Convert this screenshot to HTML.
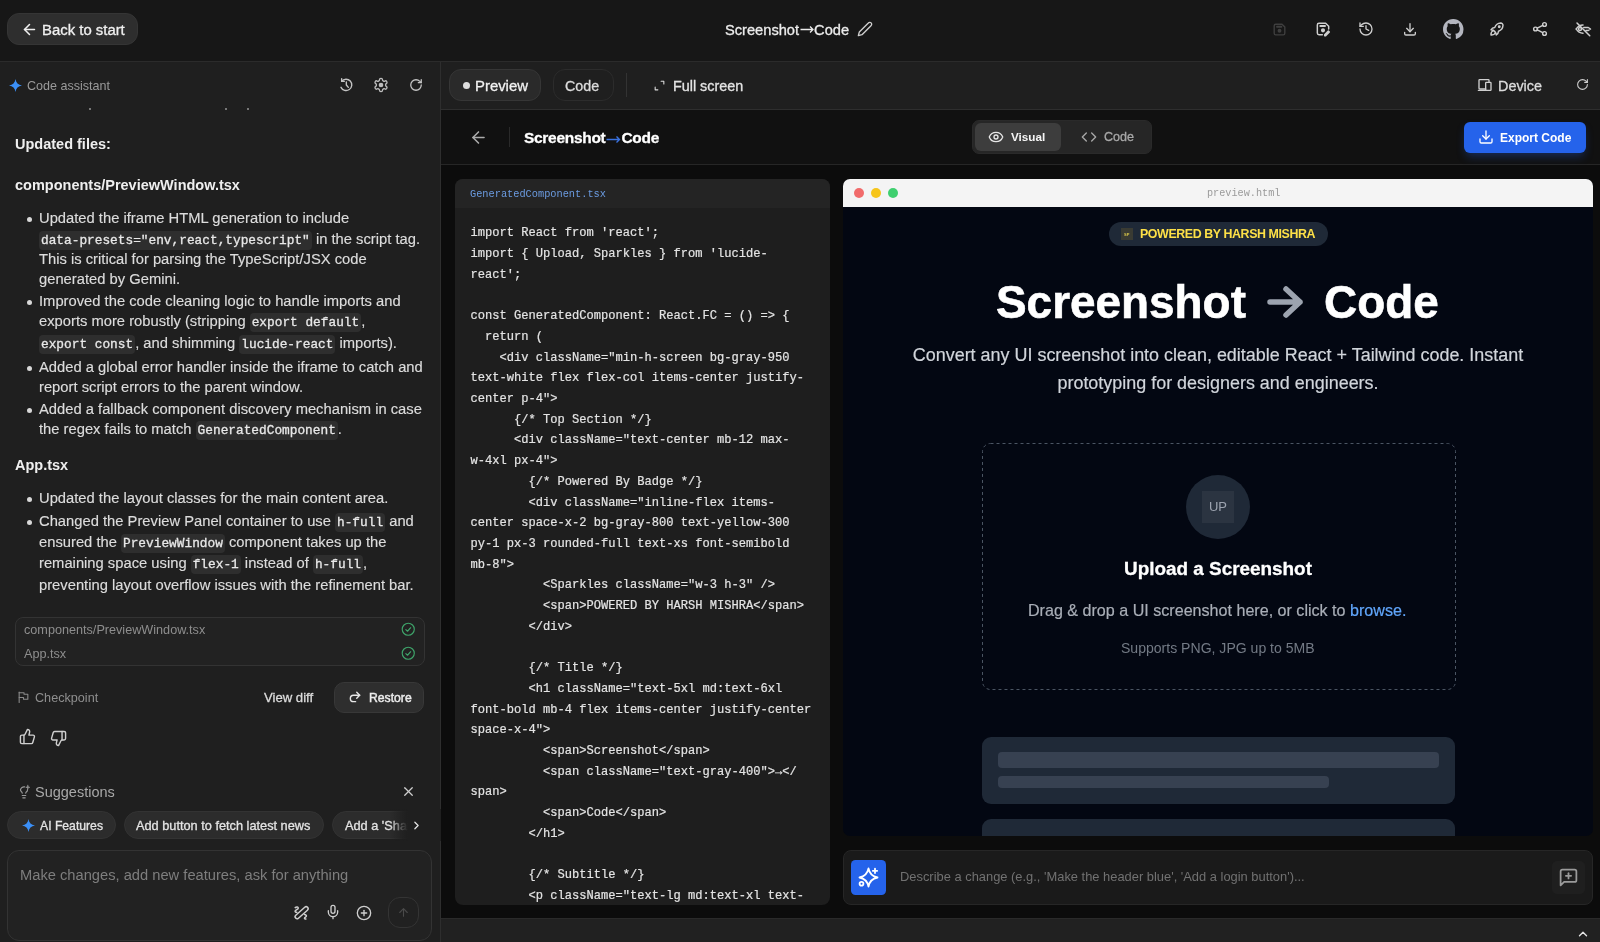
<!DOCTYPE html>
<html><head><meta charset="utf-8">
<style>
*{box-sizing:border-box;margin:0;padding:0}
html,body{width:1600px;height:942px;overflow:hidden;background:#0a0a0a;font-family:"Liberation Sans",sans-serif;color:#e5e5e5;-webkit-font-smoothing:antialiased}
.a{will-change:transform}
.a{position:absolute}
svg{display:block}
.ic{fill:none;stroke:currentColor;stroke-width:2;stroke-linecap:round;stroke-linejoin:round}
.mono{font-family:"Liberation Mono",monospace}
.med{-webkit-text-stroke:0.3px currentColor}
/* top bar */
#top{left:0;top:0;width:1600px;height:62px;background:#171717;border-bottom:1px solid #2b2b2b}
#left{left:0;top:62px;width:440px;height:880px;background:#1f1f1f}
#lborder{left:440px;top:62px;width:1px;height:880px;background:#2e2e2e}
#tool{left:441px;top:62px;width:1159px;height:48px;background:#1f1f1f;border-bottom:1px solid #2e2e2e}
#phead{left:441px;top:110px;width:1159px;height:55px;background:#111111;border-bottom:1px solid #262626}
#content{left:441px;top:165px;width:1159px;height:754px;background:#0c0c0c}
#bstrip{left:441px;top:918px;width:1159px;height:24px;background:#212121;border-top:1px solid #2a2a2a}
.ln{position:absolute;left:39px;font-size:14.75px;line-height:20px;white-space:pre;color:#dcdcdc;-webkit-text-stroke:0.15px #dcdcdc}
.ln code{font-family:"Liberation Mono",monospace;font-size:12.8px;background:#2e2e2e;border-radius:4px;padding:2px 2px;color:#e8e8e8;-webkit-text-stroke:0.3px #e8e8e8}
.bul{position:absolute;left:27px;width:5px;height:5px;border-radius:50%;background:#d8d8d8}
.h{position:absolute;left:15px;font-size:14.5px;font-weight:bold;line-height:20px;color:#efefef;white-space:pre}
.code{position:absolute;left:470.5px;top:223.4px;font-family:"Liberation Mono",monospace;font-size:12.08px;line-height:20.7px;-webkit-text-stroke:0.2px #e4e4e4;color:#e4e4e4;white-space:pre}
</style></head><body>

<!-- TOP BAR -->
<div id="top" class="a"></div>
<div class="a" style="left:7px;top:13px;width:131px;height:32px;border-radius:12px;background:#2e2e2e;border:1px solid #353535"></div>
<svg class="a ic" style="left:21px;top:20.5px;color:#efefef;stroke-width:2.2" width="17" height="17" viewBox="0 0 24 24"><path d="m12 19-7-7 7-7"/><path d="M19 12H5"/></svg>
<div class="a med" style="left:42px;top:20.6px;font-size:14.9px;line-height:18px;color:#f0f0f0">Back to start</div>

<div class="a med" style="left:725px;top:20.6px;font-size:14.65px;line-height:18px;color:#ececec">Screenshot<svg style="display:inline-block;vertical-align:1px;margin:0 0.5px" width="14" height="9" viewBox="0 0 14 9"><path d="M0.5 4.5h12.5M10 1.5l3 3-3 3" fill="none" stroke="#ececec" stroke-width="1.3"/></svg>Code</div>
<svg class="a ic" style="left:857px;top:21px;color:#cfcfcf" width="16" height="16" viewBox="0 0 24 24"><path d="M17 3a2.85 2.83 0 1 1 4 4L7.5 20.5 2 22l1.5-5.5Z"/></svg>

<!-- top icons -->
<svg class="a ic" style="left:1272px;top:22px;color:#3f3f3f;stroke-width:2.2" width="15" height="15" viewBox="0 0 24 24"><path d="M6 3.5h10l4.5 4.5v10a2.5 2.5 0 0 1-2.5 2.5H6A2.5 2.5 0 0 1 3.5 18V6A2.5 2.5 0 0 1 6 3.5"/><circle cx="12" cy="14" r="2" fill="currentColor"/><path d="M8 7.5h7" stroke-width="3"/></svg>
<svg class="a ic" style="left:1315px;top:21px;color:#cfcfcf;stroke-width:2.2" width="16" height="16" viewBox="0 0 24 24"><path d="M11 20.5H6A2.5 2.5 0 0 1 3.5 18V6A2.5 2.5 0 0 1 6 3.5h10l4.5 4.5v4"/><circle cx="12" cy="14" r="2" fill="currentColor"/><path d="M8 7.5h7" stroke-width="3"/><path d="M20 15l-5.5 5.5V22H16l5.5-5.5z"/></svg>
<svg class="a ic" style="left:1358px;top:21px;color:#cfcfcf" width="16" height="16" viewBox="0 0 24 24"><path d="M3 12a9 9 0 1 0 9-9 9.75 9.75 0 0 0-6.74 2.74L3 8"/><path d="M3 3v5h5"/><path d="M12 7v5l4 2"/></svg>
<svg class="a ic" style="left:1402px;top:20.5px;color:#cfcfcf" width="16" height="16" viewBox="0 0 24 24"><path d="M4 17v2a2 2 0 0 0 2 2h12a2 2 0 0 0 2-2v-2"/><path d="M7 11l5 5 5-5"/><path d="M12 4v12"/></svg>
<svg class="a" style="left:1443px;top:18.5px" width="20.5" height="20.5" viewBox="0 0 16 16"><path fill="#b4b6bf" d="M8 0C3.58 0 0 3.58 0 8c0 3.54 2.29 6.53 5.47 7.59.4.07.55-.17.55-.38 0-.19-.01-.82-.01-1.49-2.01.37-2.53-.49-2.69-.94-.09-.23-.48-.94-.82-1.13-.28-.15-.68-.52-.01-.53.63-.01 1.08.58 1.23.82.72 1.210 1.87.87 2.33.66.07-.52.28-.87.51-1.07-1.780-.2-3.64-.89-3.64-3.95 0-.87.31-1.59.82-2.15-.08-.2-.36-1.02.08-2.12 0 0 .67-.21 2.2.82.64-.18 1.32-.27 2-.27.68 0 1.36.09 2 .27 1.53-1.04 2.2-.82 2.2-.82.44 1.1.16 1.92.08 2.12.51.56.82 1.27.82 2.15 0 3.07-1.87 3.75-3.65 3.95.29.25.54.73.54 1.48 0 1.07-.01 1.93-.01 2.2 0 .21.15.46.55.38A8.013 8.013 0 0016 8c0-4.42-3.58-8-8-8z"/></svg>
<svg class="a ic" style="left:1487.5px;top:20px;color:#cfcfcf;stroke-width:1.9" width="18" height="18" viewBox="0 0 24 24"><path d="M4 13a8 8 0 0 1 7 7 6 6 0 0 0 3-5 9 9 0 0 0 6-8 3 3 0 0 0-3-3 9 9 0 0 0-8 6 6 6 0 0 0-5 3"/><path d="M7 14a6 6 0 0 0-3 6 6 6 0 0 0 6-3"/><circle cx="15" cy="9" r="1"/></svg>
<svg class="a ic" style="left:1530.5px;top:20px;color:#cfcfcf;stroke-width:1.9" width="18" height="18" viewBox="0 0 24 24"><circle cx="6" cy="12" r="2.5"/><circle cx="18" cy="6" r="2.5"/><circle cx="18" cy="18" r="2.5"/><path d="M8.3 10.8l7.4-3.6"/><path d="M8.3 13.2l7.4 3.6"/></svg>
<svg class="a ic" style="left:1574px;top:20px;color:#cfcfcf" width="18" height="18" viewBox="0 0 24 24"><path d="M3 12c2-3.5 5-5.5 9-5.5"/><path d="M3 12c2 3.5 5 5.5 9 5.5"/><circle cx="8" cy="12" r="2"/><path d="M13 10l6 0 3 2-3 2h-3"/><path d="M4 4l17 17"/></svg>

<!-- LEFT PANEL -->
<div id="left" class="a"></div>
<div id="lborder" class="a"></div>
<svg class="a" style="left:9px;top:79px" width="13" height="13" viewBox="0 0 24 24"><path fill="#3b8ff6" d="M12 0C12.8 7 17 11.2 24 12 17 12.8 12.8 17 12 24 11.2 17 7 12.8 0 12 7 11.2 11.2 7 12 0z"/></svg>
<div class="a" style="left:27px;top:78px;font-size:12.55px;line-height:16px;color:#9a9a9a">Code assistant</div>
<svg class="a ic" style="left:337.5px;top:77px;color:#c4c4c4;stroke-width:2.1" width="16" height="16" viewBox="0 0 24 24"><path d="M4.5 15.5A8.5 8.5 0 1 0 5.5 6.5"/><path d="M5.5 2.5v4h4"/><path d="M12.5 7.5v4.5l3 3.5"/></svg>
<svg class="a ic" style="left:373px;top:77px;color:#bdbdbd" width="16" height="16" viewBox="0 0 24 24"><path d="M12.22 2h-.44a2 2 0 0 0-2 2v.18a2 2 0 0 1-1 1.73l-.43.25a2 2 0 0 1-2 0l-.15-.08a2 2 0 0 0-2.73.73l-.22.38a2 2 0 0 0 .73 2.73l.15.1a2 2 0 0 1 1 1.72v.51a2 2 0 0 1-1 1.74l-.15.09a2 2 0 0 0-.73 2.73l.22.38a2 2 0 0 0 2.73.73l.15-.08a2 2 0 0 1 2 0l.43.25a2 2 0 0 1 1 1.73V20a2 2 0 0 0 2 2h.44a2 2 0 0 0 2-2v-.18a2 2 0 0 1 1-1.73l.43-.25a2 2 0 0 1 2 0l.15.08a2 2 0 0 0 2.73-.73l.22-.39a2 2 0 0 0-.73-2.73l-.15-.08a2 2 0 0 1-1-1.74v-.5a2 2 0 0 1 1-1.74l.15-.09a2 2 0 0 0 .73-2.73l-.22-.38a2 2 0 0 0-2.73-.73l-.15.08a2 2 0 0 1-2 0l-.43-.25a2 2 0 0 1-1-1.73V4a2 2 0 0 0-2-2z"/><circle cx="12" cy="12" r="2.5" fill="currentColor"/></svg>
<svg class="a ic" style="left:409px;top:78px;color:#c4c4c4;stroke-width:2.2" width="14" height="14" viewBox="0 0 24 24"><path d="M21 12a9 9 0 1 1-9-9c2.52 0 4.93 1 6.74 2.74L21 8"/><path d="M21 3v5h-5"/></svg>

<div class="a" style="left:89px;top:108px;width:2px;height:2px;background:#777"></div>
<div class="a" style="left:225px;top:108px;width:2px;height:2px;background:#777"></div>
<div class="a" style="left:247px;top:108px;width:2px;height:2px;background:#777"></div>

<div class="h" style="top:133.8px">Updated files:</div>
<div class="h" style="top:175px">components/PreviewWindow.tsx</div>

<div class="bul" style="top:216.7px"></div>
<div class="ln" style="top:208px">Updated the iframe HTML generation to include</div>
<div class="ln" style="top:229px"><code>data-presets="env,react,typescript"</code> in the script tag.</div>
<div class="ln" style="top:249px">This is critical for parsing the TypeScript/JSX code</div>
<div class="ln" style="top:269px">generated by Gemini.</div>
<div class="bul" style="top:299.7px"></div>
<div class="ln" style="top:291px">Improved the code cleaning logic to handle imports and</div>
<div class="ln" style="top:311px">exports more robustly (stripping <code>export default</code>,</div>
<div class="ln" style="top:333px"><code>export const</code>, and shimming <code>lucide-react</code> imports).</div>
<div class="bul" style="top:365.7px"></div>
<div class="ln" style="top:357px">Added a global error handler inside the iframe to catch and</div>
<div class="ln" style="top:377px">report script errors to the parent window.</div>
<div class="bul" style="top:407.7px"></div>
<div class="ln" style="top:399px">Added a fallback component discovery mechanism in case</div>
<div class="ln" style="top:419px">the regex fails to match <code>GeneratedComponent</code>.</div>

<div class="h" style="top:455px">App.tsx</div>
<div class="bul" style="top:496.7px"></div>
<div class="ln" style="top:488px">Updated the layout classes for the main content area.</div>
<div class="bul" style="top:519.7px"></div>
<div class="ln" style="top:511px">Changed the Preview Panel container to use <code>h-full</code> and</div>
<div class="ln" style="top:532px">ensured the <code>PreviewWindow</code> component takes up the</div>
<div class="ln" style="top:553px">remaining space using <code>flex-1</code> instead of <code>h-full</code>,</div>
<div class="ln" style="top:575px">preventing layout overflow issues with the refinement bar.</div>

<!-- files box -->
<div class="a" style="left:15px;top:617px;width:410px;height:49px;border:1px solid #333;border-radius:8px;background:#222"></div>
<div class="a" style="left:24px;top:622px;font-size:12.65px;line-height:16px;color:#8e8e8e">components/PreviewWindow.tsx</div>
<div class="a" style="left:24px;top:646px;font-size:12.65px;line-height:16px;color:#8e8e8e">App.tsx</div>
<svg class="a ic" style="left:400.5px;top:622px;color:#3fa56b;stroke-width:1.9" width="14.5" height="14.5" viewBox="0 0 24 24"><circle cx="12" cy="12" r="10"/><path d="m8 12.5 2.8 2.8 5.2-5.8"/></svg>
<svg class="a ic" style="left:400.5px;top:646px;color:#3fa56b;stroke-width:1.9" width="14.5" height="14.5" viewBox="0 0 24 24"><circle cx="12" cy="12" r="10"/><path d="m8 12.5 2.8 2.8 5.2-5.8"/></svg>

<!-- checkpoint -->
<svg class="a ic" style="left:17px;top:690px;color:#8a8a8a" width="13" height="14" viewBox="0 0 24 24"><path d="M4 22V3"/><path d="M4 4h9v3h7v9h-8v-3H4"/></svg>
<div class="a" style="left:35px;top:690px;font-size:12.63px;line-height:16px;color:#8e8e8e">Checkpoint</div>
<div class="a med" style="left:264px;top:690px;font-size:13.14px;line-height:16px;color:#dcdcdc">View diff</div>
<div class="a" style="left:334px;top:682px;width:90px;height:31px;border-radius:10px;background:#2e2e2e;border:1px solid #383838"></div>
<svg class="a ic" style="left:348px;top:690px;color:#e8e8e8;stroke-width:2.4" width="14" height="14" viewBox="0 0 24 24"><path d="m15 4 5 5-5 5"/><path d="M20 9H9.5a5.5 5.5 0 0 0 0 11H13"/></svg>
<div class="a" style="left:368.5px;top:689.5px;font-size:12.2px;line-height:16px;color:#ececec;-webkit-text-stroke:0.45px #ececec">Restore</div>

<svg class="a ic" style="left:19px;top:728px;color:#cfcfcf" width="17" height="17" viewBox="0 0 24 24"><path d="M7 10v12"/><path d="M15 5.88 14 10h5.83a2 2 0 0 1 1.92 2.56l-2.33 8A2 2 0 0 1 17.5 22H4a2 2 0 0 1-2-2v-8a2 2 0 0 1 2-2h2.76a2 2 0 0 0 1.79-1.11L12 2a3.13 3.13 0 0 1 3 3.88Z"/></svg>
<svg class="a ic" style="left:50px;top:730px;color:#cfcfcf" width="17" height="17" viewBox="0 0 24 24"><path d="M17 14V2"/><path d="M9 18.12 10 14H4.17a2 2 0 0 1-1.92-2.56l2.33-8A2 2 0 0 1 6.5 2H20a2 2 0 0 1 2 2v8a2 2 0 0 1-2 2h-2.76a2 2 0 0 0-1.79 1.11L12 22a3.13 3.13 0 0 1-3-3.88Z"/></svg>

<!-- suggestions -->
<svg class="a ic" style="left:17px;top:784px;color:#9a9a9a" width="14" height="16" viewBox="0 0 24 24"><path d="M15 14c.2-1 .7-1.7 1.5-2.5 1-.9 1.5-2.2 1.5-3.5"/><path d="M13 3.2A6 6 0 0 0 6 8c0 1 .2 2.2 1.5 3.5.7.7 1.3 1.5 1.5 2.5"/><path d="M9 18h6"/><path d="M10 22h4"/><path fill="currentColor" stroke="currentColor" stroke-width="1" d="M18.5 0.5c.3 2.2 1.3 3.2 3.5 3.5-2.2.3-3.2 1.3-3.5 3.5-.3-2.2-1.3-3.2-3.5-3.5 2.2-.3 3.2-1.3 3.5-3.5z"/></svg>
<div class="a" style="left:35px;top:783px;font-size:14.5px;line-height:18px;color:#a8a8a8">Suggestions</div>
<svg class="a ic" style="left:401px;top:784px;color:#cfcfcf" width="15" height="15" viewBox="0 0 24 24"><path d="M18 6 6 18"/><path d="m6 6 12 12"/></svg>

<div class="a" style="left:7px;top:811px;width:109px;height:28px;border-radius:14px;background:#2c2c2c;border:1px solid #333"></div>
<svg class="a" style="left:22px;top:819px" width="13" height="13" viewBox="0 0 24 24"><path fill="#3b8ff6" d="M12 0C12.8 7 17 11.2 24 12 17 12.8 12.8 17 12 24 11.2 17 7 12.8 0 12 7 11.2 11.2 7 12 0z"/></svg>
<div class="a med" style="left:40px;top:818px;font-size:12.2px;line-height:16px;color:#e4e4e4">AI Features</div>
<div class="a" style="left:124px;top:811px;width:200px;height:28px;border-radius:14px;background:#2c2c2c;border:1px solid #333"></div>
<div class="a med" style="left:136px;top:818px;font-size:12.76px;line-height:16px;color:#e4e4e4">Add button to fetch latest news</div>
<div class="a" style="left:332px;top:811px;width:110px;height:28px;border-radius:14px;background:#2c2c2c;border:1px solid #333"></div>
<div class="a med" style="left:345px;top:818px;font-size:12.76px;line-height:16px;color:#e4e4e4;white-space:nowrap">Add a 'Share</div>
<div class="a" style="left:390px;top:809px;width:51px;height:32px;background:linear-gradient(90deg,rgba(31,31,31,0) 0px,rgba(31,31,31,0.8) 13px,#1f1f1f 18px)"></div>
<svg class="a ic" style="left:409.5px;top:818.5px;color:#e4e4e4;stroke-width:2.3" width="13" height="13" viewBox="0 0 24 24"><path d="m9 18 6-6-6-6"/></svg>

<!-- input box -->
<div class="a" style="left:7px;top:850px;width:425px;height:91px;border-radius:12px;background:#222;border:1px solid #333"></div>
<div class="a" style="left:20px;top:866px;font-size:14.7px;line-height:18px;color:#7e7e7e">Make changes, add new features, ask for anything</div>
<svg class="a" style="left:292px;top:904px" width="18" height="18" viewBox="0 0 18 18"><g fill="none" stroke="#cfcfcf" stroke-width="1.5" stroke-linecap="round"><rect x="-8" y="-2" width="16" height="4" rx="2" transform="translate(9.6 8.7) rotate(-41.8)"/><path d="M3.2 3.6c1.2-1 3.3-.8 3 .6-.3 1.2-2.9 1.6-3.1 3-.1.9.8 1.3 1.7 1.1"/><path d="M12.6 10.6c1 .2 2 .7 1.8 1.6-.2.9-1.8 1.2-1.9 2.1 0 .6.6.9 1.4.8"/></g></svg>
<svg class="a ic" style="left:325px;top:904px;color:#cfcfcf" width="16" height="16" viewBox="0 0 24 24"><rect x="9" y="2" width="6" height="12" rx="3"/><path d="M19 10v2a7 7 0 0 1-14 0v-2"/><path d="M12 19v3"/></svg>
<svg class="a ic" style="left:356px;top:904.5px;color:#cfcfcf" width="16" height="16" viewBox="0 0 24 24"><circle cx="12" cy="12" r="10"/><path d="M8 12h8"/><path d="M12 8v8"/></svg>
<div class="a" style="left:388px;top:897px;width:31px;height:31px;border-radius:12px;border:1px solid #343434;background:#212121"></div>
<svg class="a ic" style="left:397px;top:906px;color:#4a4a4a" width="13" height="13" viewBox="0 0 24 24"><path d="m5 12 7-7 7 7"/><path d="M12 19V5"/></svg>

<!-- RIGHT TOOLBAR -->
<div id="tool" class="a"></div>
<div class="a" style="left:449px;top:69px;width:92px;height:32px;border-radius:12px;background:#2a2a2a;border:1px solid #363636"></div>
<div class="a" style="left:463px;top:82px;width:7px;height:7px;border-radius:50%;background:#dedede"></div>
<div class="a med" style="left:475px;top:77px;font-size:14.9px;line-height:18px;color:#f2f2f2">Preview</div>
<div class="a" style="left:553px;top:69px;width:61px;height:32px;border-radius:12px;border:1px solid #2c2c2c"></div>
<div class="a med" style="left:565px;top:77px;font-size:14.3px;line-height:18px;color:#dcdcdc">Code</div>
<div class="a" style="left:626px;top:73px;width:1px;height:24px;background:#333"></div>
<svg class="a ic" style="left:653px;top:79px;color:#dcdcdc" width="13" height="13" viewBox="0 0 24 24"><path d="M4 15v5h5"/><path d="M15 4h5v5"/></svg>
<div class="a med" style="left:673px;top:77px;font-size:14.35px;line-height:18px;color:#e4e4e4">Full screen</div>
<svg class="a ic" style="left:1477px;top:77px;color:#cfcfcf" width="16" height="16" viewBox="0 0 24 24"><path d="M13 9a1 1 0 0 1 1-1h6a1 1 0 0 1 1 1v10a1 1 0 0 1-1 1h-6a1 1 0 0 1-1-1z"/><path d="M18 8V5a1 1 0 0 0-1-1H4a1 1 0 0 0-1 1v12a1 1 0 0 0 1 1h9"/><path d="M2 20h11"/></svg>
<div class="a med" style="left:1498px;top:77px;font-size:14.4px;line-height:18px;color:#dcdcdc">Device</div>
<svg class="a ic" style="left:1576px;top:78px;color:#cfcfcf" width="13" height="13" viewBox="0 0 24 24"><path d="M21 12a9 9 0 1 1-9-9c2.52 0 4.93 1 6.74 2.74L21 8"/><path d="M21 3v5h-5"/></svg>

<!-- PREVIEW HEADER -->
<div id="phead" class="a"></div>
<svg class="a ic" style="left:469px;top:127.7px;color:#ababab;stroke-width:2" width="19" height="19" viewBox="0 0 24 24"><path d="m12 19-7-7 7-7"/><path d="M19 12H5"/></svg>
<div class="a" style="left:509px;top:127px;width:1px;height:20px;background:#2a2a2a"></div>
<div class="a" style="left:524px;top:128.7px;font-size:15.5px;font-weight:bold;line-height:18px;color:#fff;letter-spacing:-0.3px;-webkit-text-stroke:0.3px #fff">Screenshot<svg style="display:inline-block;vertical-align:-0.5px;margin:0 0.5px" width="15" height="9" viewBox="0 0 15 9"><path d="M0.5 4.5h13M10.5 1.5l3 3-3 3" fill="none" stroke="#3a72e0" stroke-width="1.4"/></svg>Code</div>

<div class="a" style="left:972px;top:120px;width:180px;height:34px;border-radius:7px;background:#262626;border:1px solid #2a2a2a"></div>
<div class="a" style="left:975px;top:123px;width:86px;height:28px;border-radius:6px;background:#3d3d3d"></div>
<svg class="a ic" style="left:988px;top:129px;color:#e8e8e8" width="16" height="16" viewBox="0 0 24 24"><path d="M2.06 12.35a1 1 0 0 1 0-.7 10.75 10.75 0 0 1 19.88 0 1 1 0 0 1 0 .7 10.75 10.75 0 0 1-19.88 0"/><circle cx="12" cy="12" r="3"/></svg>
<div class="a" style="left:1011px;top:129px;font-size:11.7px;font-weight:bold;line-height:16px;color:#f4f4f4">Visual</div>
<svg class="a ic" style="left:1081px;top:129px;color:#a8a8a8" width="16" height="16" viewBox="0 0 24 24"><path d="m16 18 6-6-6-6"/><path d="m8 6-6 6 6 6"/></svg>
<div class="a med" style="left:1104px;top:129px;font-size:12.55px;line-height:16px;color:#a8a8a8">Code</div>

<div class="a" style="left:1464px;top:122px;width:122px;height:31px;border-radius:6px;background:#2563eb;box-shadow:0 5px 10px -2px rgba(37,99,235,0.35)"></div>
<svg class="a ic" style="left:1478px;top:129px;color:#fff" width="16" height="16" viewBox="0 0 24 24"><path d="M21 15v4a2 2 0 0 1-2 2H5a2 2 0 0 1-2-2v-4"/><path d="m7 10 5 5 5-5"/><path d="M12 15V3"/></svg>
<div class="a" style="left:1500px;top:129.5px;font-size:12px;font-weight:bold;line-height:16px;color:#fff">Export Code</div>

<!-- CONTENT -->
<div id="content" class="a"></div>
<div class="a" style="left:455px;top:179px;width:375px;height:726px;border-radius:8px;background:#1e1e1e;overflow:hidden">
  <div style="height:29px;background:#242424"></div>
</div>
<div class="a mono" style="left:470px;top:187px;font-size:10.3px;line-height:14px;color:#6b9be0">GeneratedComponent.tsx</div>
<div class="code">import React from 'react';
import { Upload, Sparkles } from 'lucide-
react';

const GeneratedComponent: React.FC = () =&gt; {
  return (
    &lt;div className="min-h-screen bg-gray-950
text-white flex flex-col items-center justify-
center p-4"&gt;
      {/* Top Section */}
      &lt;div className="text-center mb-12 max-
w-4xl px-4"&gt;
        {/* Powered By Badge */}
        &lt;div className="inline-flex items-
center space-x-2 bg-gray-800 text-yellow-300
py-1 px-3 rounded-full text-xs font-semibold
mb-8"&gt;
          &lt;Sparkles className="w-3 h-3" /&gt;
          &lt;span&gt;POWERED BY HARSH MISHRA&lt;/span&gt;
        &lt;/div&gt;

        {/* Title */}
        &lt;h1 className="text-5xl md:text-6xl
font-bold mb-4 flex items-center justify-center
space-x-4"&gt;
          &lt;span&gt;Screenshot&lt;/span&gt;
          &lt;span className="text-gray-400"&gt;→&lt;/
span&gt;
          &lt;span&gt;Code&lt;/span&gt;
        &lt;/h1&gt;

        {/* Subtitle */}
        &lt;p className="text-lg md:text-xl text-</div>

<!-- preview frame -->
<div class="a" style="left:843px;top:179px;width:750px;height:657px;border-radius:7px;background:#030712;overflow:hidden">
  <div style="height:28px;background:#f4f4f4"></div>
</div>
<div class="a" style="left:854px;top:187.5px;width:10px;height:10px;border-radius:50%;background:#f16b6b"></div>
<div class="a" style="left:871px;top:187.5px;width:10px;height:10px;border-radius:50%;background:#f6c51b"></div>
<div class="a" style="left:888px;top:187.5px;width:10px;height:10px;border-radius:50%;background:#3fcf6f"></div>
<div class="a mono" style="left:1207px;top:187px;font-size:10.2px;line-height:14px;color:#9a9a9a">preview.html</div>

<div class="a" style="left:1109px;top:222px;width:219px;height:24px;border-radius:12px;background:#1f2937"></div>
<div class="a" style="left:1121px;top:228px;width:12px;height:12px;background:#3a3b33"></div>
<div class="a" style="left:1124px;top:232px;font-size:4px;line-height:5px;font-weight:bold;color:#d9c74a">SP</div>
<div class="a" style="left:1140px;top:226px;font-size:12.4px;letter-spacing:-0.4px;font-weight:bold;line-height:16px;color:#fde047">POWERED BY HARSH MISHRA</div>

<div class="a" style="left:996px;top:274px;font-size:45.9px;font-weight:bold;line-height:56px;color:#fff;white-space:pre;-webkit-text-stroke:0.6px #fff">Screenshot</div>
<svg class="a" style="left:1267px;top:285px" width="37" height="34" viewBox="0 0 37 34"><path d="M3 17h30M19 4l14 13-14 13" fill="none" stroke="#9ca3af" stroke-width="5.5" stroke-linecap="round" stroke-linejoin="round"/></svg>
<div class="a" style="left:1324px;top:274px;font-size:45.9px;font-weight:bold;line-height:56px;color:#fff;white-space:pre;-webkit-text-stroke:0.6px #fff">Code</div>

<div class="a" style="left:843px;top:341.5px;width:750px;text-align:center;font-size:17.95px;line-height:27.5px;color:#d1d5db;-webkit-text-stroke:0.2px #d1d5db">Convert any UI screenshot into clean, editable React + Tailwind code. Instant<br>prototyping for designers and engineers.</div>

<svg class="a" style="left:982px;top:443px" width="474" height="247"><rect x="0.5" y="0.5" width="473" height="246" rx="8" fill="none" stroke="#4b5563" stroke-width="1" stroke-dasharray="3 3"/></svg>
<div class="a" style="left:1186px;top:475px;width:64px;height:64px;border-radius:50%;background:#1f2937"></div>
<div class="a" style="left:1202px;top:491px;width:32px;height:32px;background:#2b3441"></div>
<div class="a" style="left:1202px;top:498px;width:32px;text-align:center;font-size:13px;line-height:18px;color:#9ca3af">UP</div>
<div class="a" style="left:843px;top:557px;width:750px;text-align:center;font-size:18.9px;font-weight:bold;line-height:24px;color:#fff;-webkit-text-stroke:0.3px #fff">Upload a Screenshot</div>
<div class="a" style="left:1028px;top:600px;font-size:16.1px;line-height:20px;color:#a9aeb7;white-space:pre;-webkit-text-stroke:0.2px currentColor">Drag &amp; drop a UI screenshot here, or click to <span style="color:#60a5fa">browse.</span></div>
<div class="a" style="left:1121px;top:639px;font-size:14.05px;line-height:18px;color:#737a85;white-space:pre">Supports PNG, JPG up to 5MB</div>

<div class="a" style="left:982px;top:737px;width:473px;height:67px;border-radius:9px;background:#1f2937"></div>
<div class="a" style="left:998px;top:752px;width:441px;height:16px;border-radius:4px;background:#374151"></div>
<div class="a" style="left:998px;top:776px;width:331px;height:12px;border-radius:4px;background:#374151"></div>
<div class="a" style="left:982px;top:819px;width:473px;height:17px;border-radius:9px 9px 0 0;background:#1f2937"></div>

<!-- prompt bar -->
<div class="a" style="left:843px;top:850px;width:750px;height:55px;border-radius:8px;background:#1a1a1a;border:1px solid #262626"></div>
<div class="a" style="left:851px;top:860px;width:35px;height:35px;border-radius:4.5px;background:#2563eb"></div>
<svg class="a" style="left:851px;top:860px" width="35" height="35" viewBox="0 0 35 35"><g fill="none" stroke="#fff" stroke-width="1.8" stroke-linecap="round" stroke-linejoin="round"><path d="M17.5 8.5Q19 16 26.5 17.5Q19 19 17.5 26.5Q16 19 8.5 17.5Q16 16 17.5 8.5Z"/><path d="M24 8.6v4.4M21.8 10.8h4.4"/><circle cx="10.5" cy="23.7" r="1.9"/></g></svg>
<div class="a" style="left:900px;top:869px;font-size:12.9px;line-height:16px;color:#717171;white-space:pre">Describe a change (e.g., 'Make the header blue', 'Add a login button')...</div>
<div class="a" style="left:1552px;top:861px;width:33px;height:33px;border-radius:5px;background:#1f1f1f"></div>
<svg class="a ic" style="left:1558px;top:867px;color:#9a9a9a" width="21" height="21" viewBox="0 0 24 24"><path d="M21 15a2 2 0 0 1-2 2H7l-4 4V5a2 2 0 0 1 2-2h14a2 2 0 0 1 2 2z"/><path d="M12 7v6"/><path d="M9 10h6"/></svg>

<div id="bstrip" class="a"></div>
<svg class="a ic" style="left:1576px;top:927px;color:#e4e4e4;stroke-width:2.4" width="14" height="14" viewBox="0 0 24 24"><path d="m18 15-6-6-6 6"/></svg>

</body></html>
